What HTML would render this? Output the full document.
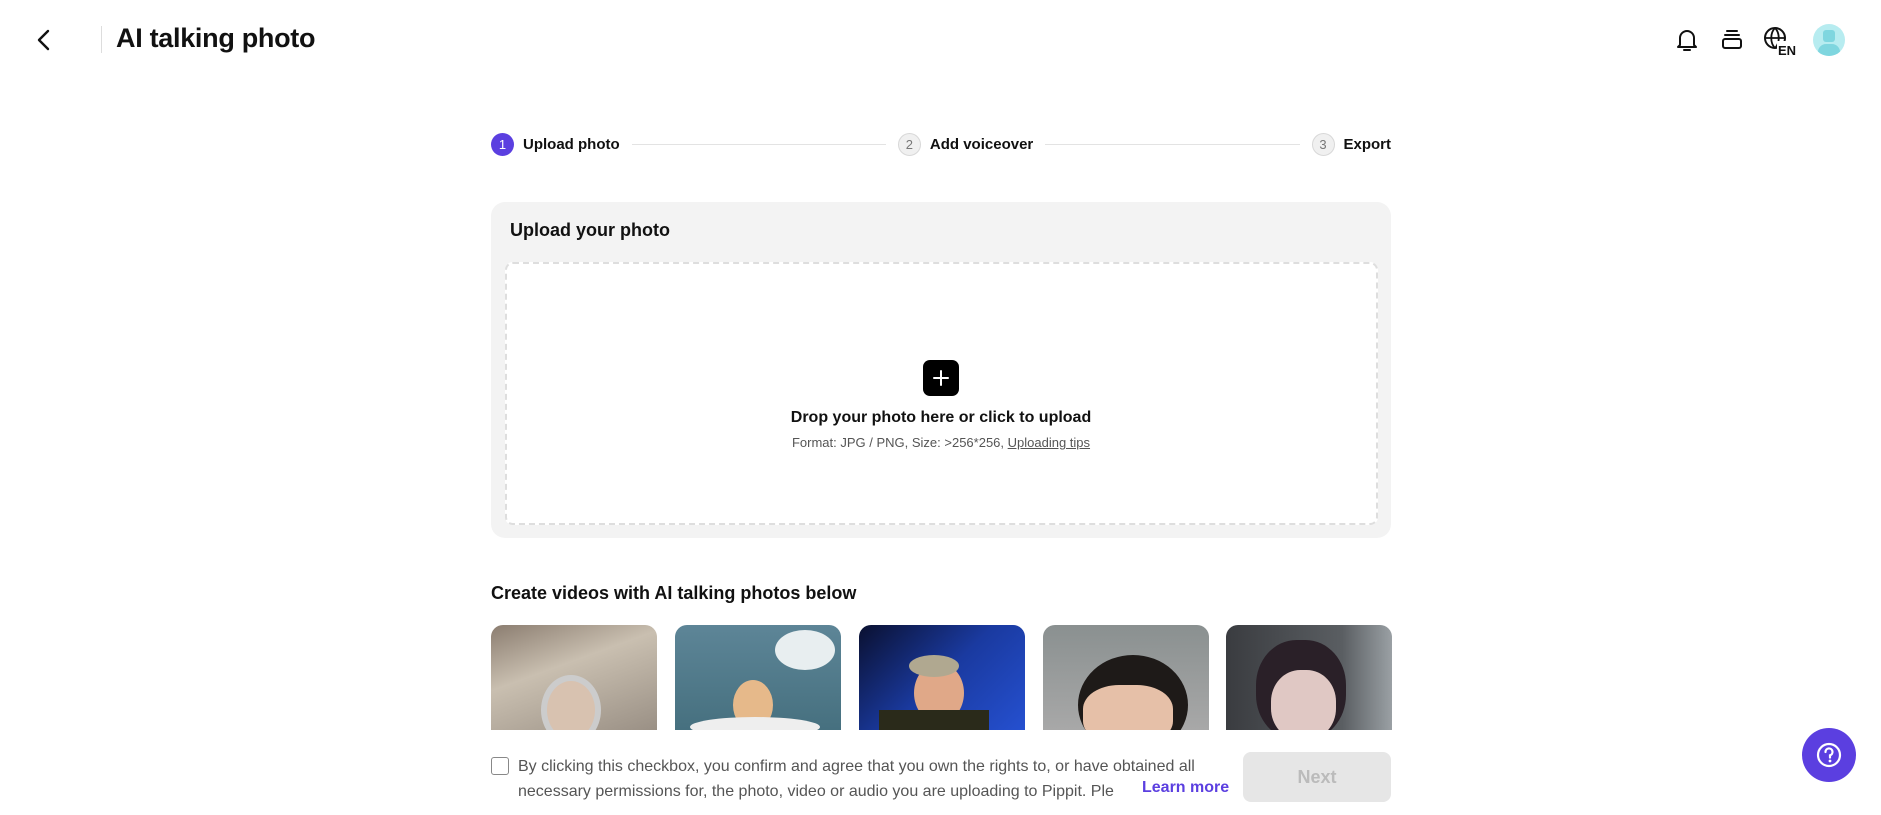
<!DOCTYPE html>
<html><head><meta charset="utf-8"><style>
*{margin:0;padding:0;box-sizing:border-box}
body{width:1881px;height:815px;background:#fff;font-family:"Liberation Sans",sans-serif;position:relative;overflow:hidden;color:#111}
.a{position:absolute}
.steps{position:absolute;left:491px;top:132px;width:900px;height:24px;display:flex;align-items:center}
.step{display:flex;align-items:center;font-size:15px;font-weight:bold;color:#111;white-space:nowrap}
.c{width:23px;height:23px;border-radius:50%;display:inline-flex;align-items:center;justify-content:center;font-size:13px;margin-right:9px;font-weight:normal}
.line{flex:1;height:1px;background:#e3e3e3;margin:0 12px}
.img{position:absolute;top:625px;width:166px;height:105px;border-radius:12px 12px 0 0;overflow:hidden}
</style></head><body>
<svg class="a" style="left:34px;top:28px" width="22" height="24" viewBox="0 0 22 24"><path d="M14 3 L5 12 L14 21" fill="none" stroke="#111" stroke-width="2.4" stroke-linecap="round" stroke-linejoin="round"/></svg>
<div class="a" style="left:101px;top:26px;width:1px;height:27px;background:#ddd"></div>
<div class="a" style="left:116px;top:23px;font-size:27px;font-weight:bold;letter-spacing:-0.3px">AI talking photo</div>
<svg class="a" style="left:1674px;top:26px" width="26" height="28" viewBox="0 0 26 28"><path d="M6 19 V12 a7 7 0 0 1 14 0 V19 L22 21 H4 Z" fill="none" stroke="#111" stroke-width="2" stroke-linejoin="round"/><path d="M10 24 H16" stroke="#111" stroke-width="2" stroke-linecap="round"/></svg>
<svg class="a" style="left:1719px;top:27px" width="26" height="26" viewBox="0 0 26 26"><rect x="4" y="12" width="18" height="9" rx="2" fill="none" stroke="#111" stroke-width="2"/><path d="M6 8 H20 M8 4 H18" stroke="#111" stroke-width="2" stroke-linecap="round"/></svg>
<svg class="a" style="left:1762px;top:25px" width="36" height="32" viewBox="0 0 36 32"><circle cx="13" cy="13" r="10" fill="none" stroke="#111" stroke-width="2"/><path d="M3 13 H23 M13 3 C8 8 8 18 13 23 M13 3 C18 8 18 18 13 23" fill="none" stroke="#111" stroke-width="1.8"/><rect x="15" y="16" width="21" height="16" fill="#fff"/><text x="16" y="30" font-size="13" font-weight="bold" font-family="Liberation Sans" fill="#111">EN</text></svg>
<div class="a" style="left:1813px;top:24px;width:32px;height:32px;border-radius:50%;background:#b7ecf0;overflow:hidden"><div class="a" style="left:10px;top:6px;width:12px;height:12px;border-radius:3px;background:#7fd6df"></div><div class="a" style="left:5px;top:20px;width:22px;height:16px;border-radius:8px;background:#7fd6df"></div></div>

<div class="steps">
<div class="step"><span class="c" style="background:#5b3fe0;color:#fff">1</span>Upload photo</div>
<div class="line"></div>
<div class="step"><span class="c" style="background:#f0f0f0;border:1px solid #d8d8d8;color:#777">2</span>Add voiceover</div>
<div class="line"></div>
<div class="step"><span class="c" style="background:#f0f0f0;border:1px solid #d8d8d8;color:#777">3</span>Export</div>
</div>

<div class="a" style="left:491px;top:202px;width:900px;height:336px;background:#f3f3f3;border-radius:14px"></div>
<div class="a" style="left:510px;top:220px;font-size:18px;font-weight:bold">Upload your photo</div>
<div class="a" style="left:505px;top:262px;width:873px;height:263px;background:#fff;border:2px dashed #dedede;border-radius:8px"></div>
<div class="a" style="left:923px;top:360px;width:36px;height:36px;background:#000;border-radius:7px"><svg width="36" height="36"><path d="M18 11 V25 M11 18 H25" stroke="#fff" stroke-width="2" stroke-linecap="round"/></svg></div>
<div class="a" style="left:491px;width:900px;top:409px;text-align:center;font-size:16px;font-weight:bold">Drop your photo here or click to upload</div>
<div class="a" style="left:491px;width:900px;top:435px;text-align:center;font-size:13px;color:#555">Format: JPG / PNG, Size: &gt;256*256, <u>Uploading tips</u></div>

<div class="a" style="left:491px;top:583px;font-size:18px;font-weight:bold">Create videos with AI talking photos below</div>
<div class="img" style="left:491px;background:linear-gradient(160deg,#8b7d70,#c9bfb0 40%,#9a9085)"><div class="a" style="left:50px;top:50px;width:60px;height:70px;border-radius:50%;background:#d8c2b0;border:6px solid #ccc"></div></div>
<div class="img" style="left:675px;background:linear-gradient(#5d8597,#46707f)"><div class="a" style="left:100px;top:5px;width:60px;height:40px;border-radius:50%;background:#e8eef0"></div><div class="a" style="left:58px;top:55px;width:40px;height:50px;border-radius:50%;background:#e6b98a"></div><div class="a" style="left:15px;top:92px;width:130px;height:20px;border-radius:50%;background:#eee"></div></div>
<div class="img" style="left:859px;background:linear-gradient(135deg,#0a1030,#1a3aa0 50%,#2550d0)"><div class="a" style="left:55px;top:38px;width:50px;height:60px;border-radius:50%;background:#e0a888"></div><div class="a" style="left:50px;top:30px;width:50px;height:22px;border-radius:50%;background:#b0a890"></div><div class="a" style="left:20px;top:85px;width:110px;height:30px;background:#2a2a1a"></div></div>
<div class="img" style="left:1043px;background:linear-gradient(#8a9090,#a8a8a8)"><div class="a" style="left:35px;top:30px;width:110px;height:100px;border-radius:50%;background:#1e1a18"></div><div class="a" style="left:40px;top:60px;width:90px;height:60px;border-radius:40%;background:#e6c0a8"></div></div>
<div class="img" style="left:1226px;background:linear-gradient(90deg,#3a3c40,#5a5e62 70%,#9aa0a4)"><div class="a" style="left:30px;top:15px;width:90px;height:100px;border-radius:45%;background:#2a2028"></div><div class="a" style="left:45px;top:45px;width:65px;height:70px;border-radius:45%;background:#e0c8c4"></div></div>

<div class="a" style="left:491px;top:730px;width:1390px;height:85px;background:#fff"></div>
<div class="a" style="left:491px;top:757px;width:18px;height:18px;border:1.5px solid #888;border-radius:3px"></div>
<div class="a" style="left:518px;top:754px;width:710px;font-size:16px;color:#555;line-height:25px;white-space:nowrap;overflow:hidden">By clicking this checkbox, you confirm and agree that you own the rights to, or have obtained all<br>necessary permissions for, the photo, video or audio you are uploading to Pippit. Ple<span style="display:inline-block;width:200px"></span></div>
<div class="a" style="left:1142px;top:779px;font-size:16px;color:#5b3fe0;font-weight:bold">Learn more</div>
<div class="a" style="left:1243px;top:752px;width:148px;height:50px;background:#e6e6e6;border-radius:8px;color:#bbb;font-size:18px;font-weight:bold;display:flex;align-items:center;justify-content:center">Next</div>
<div class="a" style="left:1802px;top:728px;width:54px;height:54px;border-radius:50%;background:#5b3fe0"><svg width="54" height="54"><circle cx="27" cy="27" r="11" fill="none" stroke="#fff" stroke-width="2.2"/><path d="M23.5 24 a3.5 3.5 0 1 1 4.5 3.3 v2.2" fill="none" stroke="#fff" stroke-width="2.2" stroke-linecap="round"/><circle cx="28" cy="33" r="1.4" fill="#fff"/></svg></div>
</body></html>
